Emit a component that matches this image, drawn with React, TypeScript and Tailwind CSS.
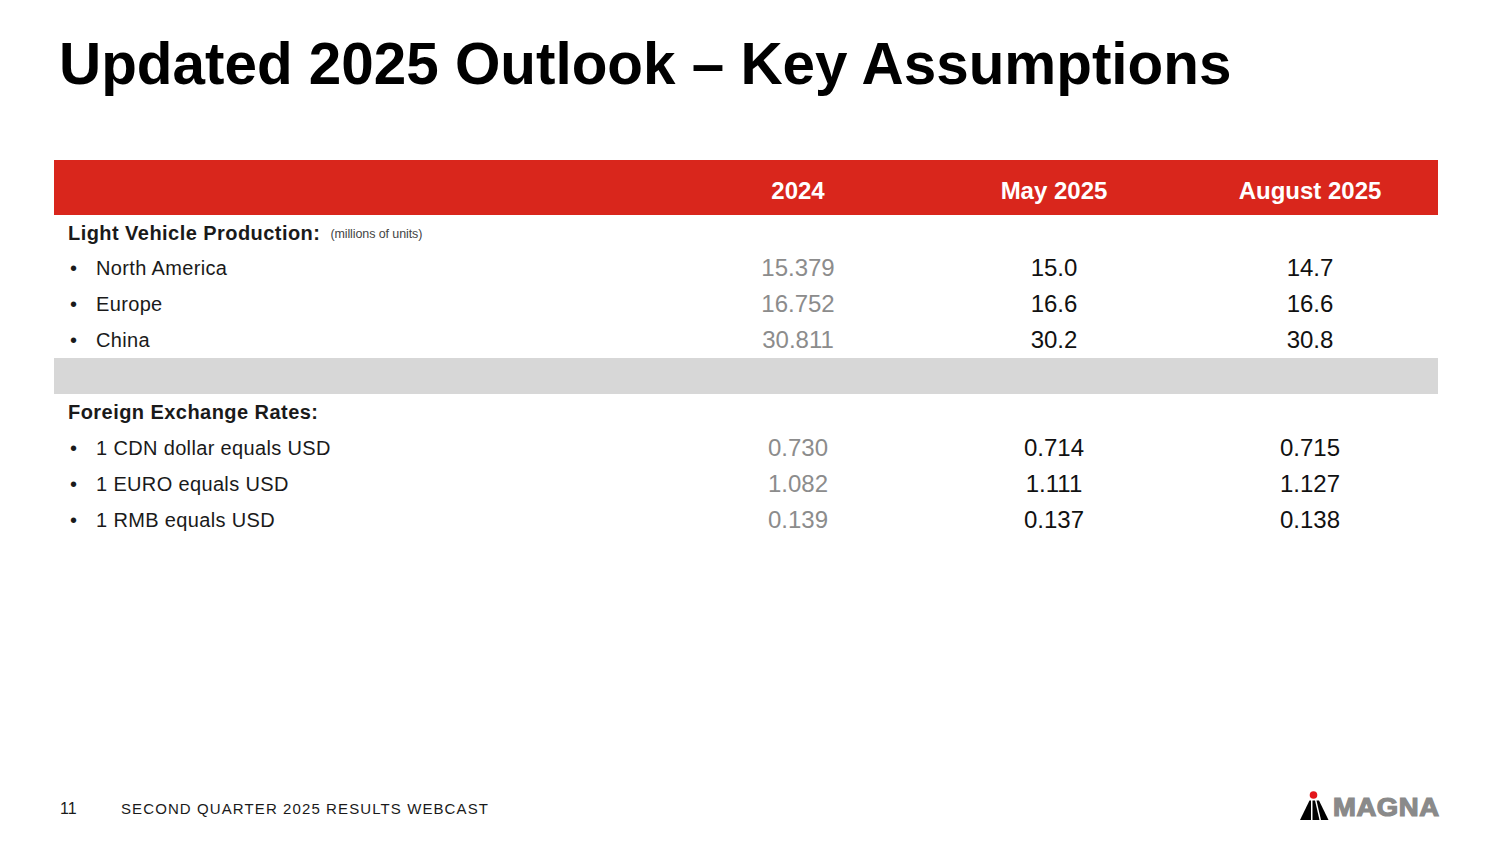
const production = [
  { label: "North America", prior: "15.379", may: "15.0", aug: "14.7" },
  { label: "Europe", prior: "16.752", may: "16.6", aug: "16.6" },
  { label: "China", prior: "30.811", may: "30.2", aug: "30.8" },
];

const rates = [
  { label: "1 CDN dollar equals USD", prior: "0.730", may: "0.714", aug: "0.715" },
  { label: "1 EURO equals USD", prior: "1.082", may: "1.111", aug: "1.127" },
  { label: "1 RMB equals USD", prior: "0.139", may: "0.137", aug: "0.138" },
];

type Row = { label: string; prior: string; may: string; aug: string };

function DataRow({ row }: { row: Row }) {
  return (
    <div className="grid h-[36px] grid-cols-[616px_256px_256px_256px] items-center">
      <div className="flex items-center text-[20px] tracking-[0.35px] text-[#1a1a1a]">
        <span className="w-[42px] pl-[16px]">•</span>
        <span>{row.label}</span>
      </div>
      <div className="text-center text-[24px] text-[#8c8c8c]">{row.prior}</div>
      <div className="text-center text-[24px] text-[#111111]">{row.may}</div>
      <div className="text-center text-[24px] text-[#111111]">{row.aug}</div>
    </div>
  );
}

function MagnaLogo() {
  return (
    <div className="flex items-end gap-[4px]">
      <svg width="29" height="30" viewBox="0 0 29 30" aria-hidden="true">
        <circle cx="13.5" cy="4" r="3.8" fill="#e3161b" />
        <polygon points="0,29 9.5,9.5 11,9.5 11,29" fill="#000" />
        <polygon points="12.5,9.5 15,9.5 19.5,29 12.5,29" fill="#000" />
        <polygon points="16.5,9.5 19,9.5 28.5,29 21,29" fill="#000" />
      </svg>
      <span className="origin-left scale-x-[1.1] pb-[1px] text-[25px] leading-[25px] font-black tracking-[0.5px] text-[#8a8a8a] [-webkit-text-stroke:1.2px_#8a8a8a]">
        MAGNA
      </span>
    </div>
  );
}

export default function App() {
  return (
    <div className="flex h-[844px] w-[1500px] flex-col bg-white font-['Liberation_Sans',Arial,sans-serif]">
      <h1 className="pl-[59px] pt-[35px] text-[58.4px] leading-[58px] font-bold text-black">
        Updated 2025 Outlook – Key Assumptions
      </h1>

      <div className="ml-[54px] mt-[67px] w-[1384px]">
        <div className="grid h-[55px] grid-cols-[616px_256px_256px_256px] items-center bg-[#d9261c] pt-[7px] text-[24px] font-bold text-white">
          <div />
          <div className="text-center">2024</div>
          <div className="text-center">May 2025</div>
          <div className="text-center">August 2025</div>
        </div>

        <div className="flex h-[35px] items-center gap-[10px] pl-[14px] text-[#1a1a1a]">
          <span className="text-[20px] font-bold tracking-[0.45px]">Light Vehicle Production:</span>
          <span className="pt-[3px] text-[12.5px] tracking-[-0.1px] text-[#444]">(millions of units)</span>
        </div>
        {production.map((row) => (
          <DataRow key={row.label} row={row} />
        ))}

        <div className="h-[36px] bg-[#d7d7d7]" />

        <div className="flex h-[36px] items-center pl-[14px] text-[20px] font-bold tracking-[0.45px] text-[#1a1a1a]">
          Foreign Exchange Rates:
        </div>
        {rates.map((row) => (
          <DataRow key={row.label} row={row} />
        ))}
      </div>

      <footer className="mt-auto flex items-end justify-between pb-[23px] pl-[60px] pr-[60px]">
        <div className="flex items-center text-[15px] text-[#1a1a1a]">
          <span className="w-[61px] text-[16px]">11</span>
          <span className="tracking-[1.1px]">SECOND QUARTER 2025 RESULTS WEBCAST</span>
        </div>
        <div className="pr-[10px]">
          <MagnaLogo />
        </div>
      </footer>
    </div>
  );
}
